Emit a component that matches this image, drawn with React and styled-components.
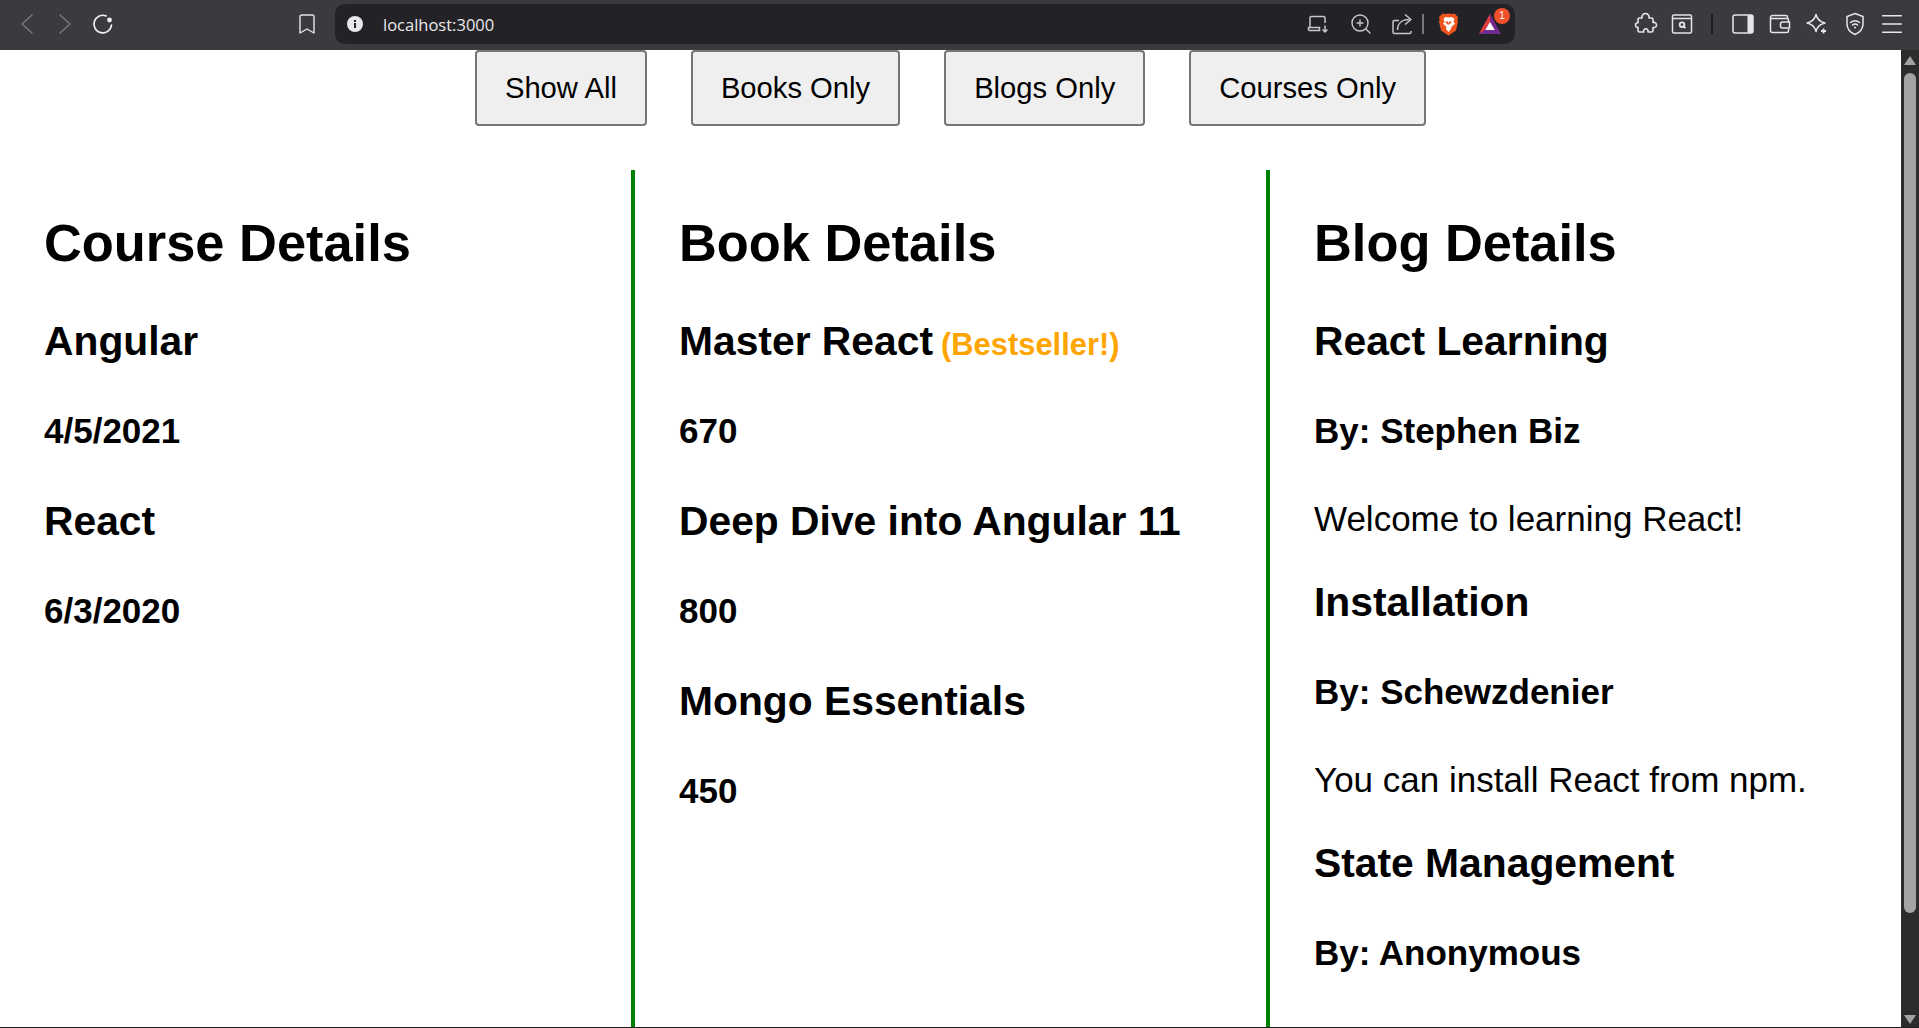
import React from 'react'
import styled, { createGlobalStyle } from 'styled-components'
import { Bookmark, ZoomIn, Menu } from 'lucide-react'

const GlobalStyle = createGlobalStyle`
  html, body {
    margin: 0;
    padding: 0;
    height: 100%;
    overflow: hidden;
    background: #ffffff;
  }
  * {
    box-sizing: border-box;
  }
`

const Shell = styled.div`
  display: flex;
  flex-direction: column;
  height: 1028px;
  border-bottom: 1px solid #1c1c1c;
  font-family: 'Liberation Sans', Arial, sans-serif;
  color: #000;
`

const Toolbar = styled.header`
  flex: none;
  display: flex;
  align-items: center;
  height: 50px;
  padding-bottom: 2px;
  background: #3b3a40;
  color: #e6e6e8;
`

const NavGroup = styled.div`
  display: flex;
  align-items: center;
  gap: 14px;
  width: 295px;
  padding-left: 15px;
`

const NavIcon = styled.span`
  display: inline-flex;
  color: ${(props) => (props.dim ? '#77767c' : '#f0f0f2')};
`

const BookmarkSlot = styled.span`
  display: inline-flex;
  justify-content: center;
  width: 24px;
  margin-right: 16px;
  color: #e6e6e8;
`

const AddressBar = styled.div`
  display: flex;
  align-items: center;
  width: 1180px;
  height: 40px;
  padding: 0 7px 0 12px;
  border-radius: 10px;
  background: #232227;
`

const Url = styled.span`
  flex: 1;
  margin-left: 20px;
  font-family: 'Open Sans', sans-serif;
  font-size: 16.5px;
  color: #e8e8ea;
`

const IconSlot = styled.span`
  position: relative;
  display: inline-flex;
  justify-content: center;
  align-items: center;
  width: ${(props) => props.size}px;
  color: ${(props) => props.tint || 'inherit'};
`

const Separator = styled.span`
  flex: none;
  width: ${(props) => props.thick || 1}px;
  height: 20px;
  background: ${(props) => props.color};
`

const Badge = styled.span`
  position: absolute;
  top: -6px;
  right: -2px;
  width: 16px;
  height: 16px;
  border-radius: 50%;
  background: #f0502a;
  color: #fff;
  font-size: 10px;
  line-height: 16px;
  text-align: center;
`

const Extensions = styled.div`
  display: flex;
  align-items: center;
  margin-left: 113px;
  color: #e6e6e8;
`

const Body = styled.div`
  flex: 1;
  display: flex;
  min-height: 0;
`

const Page = styled.main`
  flex: 1;
  min-width: 0;
  overflow: hidden;
  background: #fff;
`

const Filters = styled.nav`
  display: flex;
  justify-content: center;
  gap: 44px;
`

const FilterButton = styled.button`
  height: 76px;
  padding: 0 28px;
  border: 2px solid #767676;
  border-radius: 4px;
  background: #efefef;
  color: #000;
  font-family: inherit;
  font-size: 29.2px;
`

const Columns = styled.div`
  display: grid;
  grid-template-columns: repeat(3, 635px);
  margin-top: 44px;
`

const Column = styled.section`
  min-height: 900px;
  padding: 0 44px;
  border-right: ${(props) => (props.last ? 'none' : '4px solid green')};
`

const Heading = styled.h1`
  margin: 42px 0 44px;
  font-size: 52.4px;
  line-height: 62px;
`

const Title = styled.h2`
  margin: 39px 0 0;
  font-size: 40.8px;
  line-height: 47px;
  white-space: nowrap;
`

const Meta = styled.h3`
  margin: 46px 0 47px;
  font-size: 35px;
  line-height: 40px;
`

const Bestseller = styled.span`
  margin-left: 8px;
  color: orange;
  font-size: 30.9px;
  line-height: 1;
`

const Text = styled.p`
  margin: 0;
  font-size: 35px;
  line-height: 42px;
`

const Scrollbar = styled.aside`
  flex: none;
  display: flex;
  flex-direction: column;
  align-items: center;
  width: 18px;
  background: #2c2c2c;
`

const ScrollArrow = styled.span`
  width: 0;
  height: 0;
  margin: ${(props) => (props.down ? '0 0 3px' : '6px 0')};
  border-left: 6.5px solid transparent;
  border-right: 6.5px solid transparent;
  border-bottom: ${(props) => (props.down ? 'none' : '9px solid #a3a3a3')};
  border-top: ${(props) => (props.down ? '9px solid #a3a3a3' : 'none')};
`

const ScrollThumb = styled.span`
  width: 12px;
  height: 840px;
  margin-top: 2px;
  border-radius: 6px;
  background: #a3a3a3;
`

const ScrollTrack = styled.span`
  flex: 1;
`

const Chevron = ({ flip }) => (
  <svg width="24" height="24" viewBox="0 0 24 24" fill="none" stroke="currentColor" strokeWidth="1.5" strokeLinecap="round" strokeLinejoin="round">
    <path d={flip ? 'M7 3l10 9-10 9' : 'M17 3 7 12l10 9'} />
  </svg>
)

const Reload = () => (
  <svg width="24" height="24" viewBox="0 0 24 24" fill="none" stroke="currentColor" strokeWidth="1.7" strokeLinecap="round">
    <path d="M20.500 13A8.800 8.800 0 1 1 15 3.900" />
    <circle cx="18.500" cy="8" r="2.400" fill="currentColor" stroke="none" />
  </svg>
)

const InfoDot = () => (
  <svg width="16" height="16" viewBox="0 0 16 16">
    <circle cx="8" cy="8" r="8" fill="#e8e8ea" />
    <rect x="7" y="7" width="2" height="5" fill="#232227" />
    <rect x="7" y="4" width="2" height="2" fill="#232227" />
  </svg>
)

const Cast = () => (
  <svg width="22" height="22" viewBox="0 0 22 22" fill="none" stroke="currentColor" strokeWidth="1.500">
    <path d="M3 14V5a1.500 1.500 0 0 1 1.500-1.500h12A1.500 1.500 0 0 1 18 5v5" />
    <path d="M1.500 14.500h11v3h-10a1 1 0 0 1-1-1z" />
    <path d="M18 12.500v6.500M15.500 16.500 18 19l2.500-2.500" />
  </svg>
)

const ShareBox = () => (
  <svg width="22" height="24" viewBox="0 0 22 24" fill="none" stroke="currentColor" strokeWidth="1.500" strokeLinejoin="round">
    <path d="M8 8.500H3.500A1.500 1.500 0 0 0 2 10v10a1.500 1.500 0 0 0 1.500 1.500h15A1.500 1.500 0 0 0 20 20v-1" />
    <path d="M6.500 18c0-6 4-10.500 12-10.500" />
    <path d="M14 2.500l6 5-6 5" />
  </svg>
)

const BraveLion = () => (
  <svg width="21" height="23" viewBox="0 0 20 23">
    <path d="M10 .500 13.500 1 16 .500l3.500 3.500-.6 2 .6 2.500-2 9L10 22.500 2.500 17.500l-2-9L1.100 6 .500 4 4 .500 6.500 1z" fill="#f1531d" />
    <path d="M10 4.500l3-.500 3 1.800L15 9l1.500 1.800-3.500 3L12.500 16 10 19 7.500 16l.500-2.200-3.500-3L6 9 5 5.800 7 4z" fill="#fff" />
    <path d="M6.500 8.500h2.700l.8 2 .8-2h2.700l-2.400 3H8.900z" fill="#f1531d" />
  </svg>
)

const BatTriangle = () => (
  <svg width="22" height="20" viewBox="0 0 22 20">
    <path d="M11 0 22 20H0z" fill="#7a2a8f" />
    <path d="M11 0 0 20l5.500-4z" fill="#ee3f35" />
    <path d="M11 0 5.500 16 11 8z" fill="#e9413a" />
    <path d="M11 8l4.800 8H6.200z" fill="#fff" />
    <path d="M0 20h22l-5-3.500H5z" fill="#6e2c91" />
  </svg>
)

const PuzzlePiece = () => (
  <svg width="24" height="24" viewBox="0 0 24 24" fill="none" stroke="currentColor" strokeWidth="1.600" strokeLinejoin="round">
    <path d="M5.500 6H8c-.5-2.800 1.500-4.500 3.500-4.500S15.500 3.200 15 6h2.500A1.500 1.500 0 0 1 19 7.500v3c2.300-.5 3.500 1 3.500 2.500s-1.200 3-3.500 2.500v3a1.500 1.500 0 0 1-1.500 1.500H14c.5-2-.8-3.200-2.200-3.200S9.200 18 9.800 20H5.500A1.500 1.500 0 0 1 4 18.500v-3.200c-1.500.3-2.500-.8-2.500-2.200s1-2.600 2.500-2.300v-3.300A1.500 1.500 0 0 1 5.500 6z" />
  </svg>
)

const ReaderSearch = () => (
  <svg width="22" height="20" viewBox="0 0 22 20" fill="none" stroke="currentColor" strokeWidth="1.500">
    <rect x="1.500" y="1" width="19" height="18" rx="1.500" />
    <path d="M1.500 4.500h19" />
    <circle cx="11" cy="10.700" r="2.300" strokeWidth="1.800" />
    <path d="M12.800 12.500 14.500 14.200" strokeWidth="1.800" />
  </svg>
)

const SidePanel = () => (
  <svg width="22" height="20" viewBox="0 0 22 20">
    <rect x="1" y="1" width="20" height="18" rx="2" fill="none" stroke="currentColor" strokeWidth="1.500" />
    <rect x="15.500" y="1" width="5.500" height="18" rx="1" fill="currentColor" />
  </svg>
)

const WalletIcon = () => (
  <svg width="22" height="20" viewBox="0 0 22 20" fill="none" stroke="currentColor" strokeWidth="1.500">
    <path d="M18.500 4.500V3A1.500 1.500 0 0 0 17 1.500H3.500A2 2 0 0 0 1.500 3.500v13a2 2 0 0 0 2 2H18a1.500 1.500 0 0 0 1.500-1.500v-2" />
    <path d="M1.500 4.500H18a1.500 1.500 0 0 1 1.500 1.500v2" />
    <path d="M20.500 8h-7a2 2 0 0 0-2 2v2a2 2 0 0 0 2 2h7z" />
  </svg>
)

const Leo = () => (
  <svg width="22" height="22" viewBox="0 0 22 22" fill="none" stroke="currentColor" strokeWidth="1.500" strokeLinejoin="round">
    <path d="M10 1.500c1.200 5 3.500 7.300 9 8.500-5.500 1.200-7.800 3.500-9 8.500C8.800 13.500 6.500 11.200 1 10c5.500-1.200 7.800-3.500 9-8.500z" />
    <path d="M17.500 15.500v5M15 18h5" strokeWidth="1.800" />
  </svg>
)

const ShieldWifi = () => (
  <svg width="20" height="24" viewBox="0 0 20 24" fill="none" stroke="currentColor" strokeWidth="1.500" strokeLinecap="round">
    <path d="M10 1.500 18 4.500V12c0 5-3.500 8.500-8 10.500C5.500 20.500 2 17 2 12V4.500z" />
    <path d="M5.500 10.500a6.500 6.500 0 0 1 9 0M7.500 13a3.500 3.500 0 0 1 5 0" />
    <circle cx="10" cy="15.500" r="1" fill="currentColor" stroke="none" />
  </svg>
)

const courses = [
  { id: 1, title: 'Angular', date: '4/5/2021' },
  { id: 2, title: 'React', date: '6/3/2020' },
]

const books = [
  { id: 1, title: 'Master React', pages: 670, best: true },
  { id: 2, title: 'Deep Dive into Angular 11', pages: 800 },
  { id: 3, title: 'Mongo Essentials', pages: 450 },
]

const blogs = [
  { id: 1, title: 'React Learning', author: 'Stephen Biz', text: 'Welcome to learning React!' },
  { id: 2, title: 'Installation', author: 'Schewzdenier', text: 'You can install React from npm.' },
  { id: 3, title: 'State Management', author: 'Anonymous' },
]

const filters = ['Show All', 'Books Only', 'Blogs Only', 'Courses Only']

const App = () => (
  <Shell>
    <GlobalStyle />
    <Toolbar>
      <NavGroup>
        <NavIcon dim><Chevron /></NavIcon>
        <NavIcon dim><Chevron flip /></NavIcon>
        <NavIcon><Reload /></NavIcon>
      </NavGroup>
      <BookmarkSlot><Bookmark size={26} strokeWidth={1.4} /></BookmarkSlot>
      <AddressBar>
        <InfoDot />
        <Url>localhost:3000</Url>
        <IconSlot size={44} tint="#c8c8ca"><Cast /></IconSlot>
        <IconSlot size={42} tint="#c8c8ca"><ZoomIn size={24} strokeWidth={1.4} /></IconSlot>
        <IconSlot size={40} tint="#c8c8ca"><ShareBox /></IconSlot>
        <Separator color="#77767c" thick={2} />
        <IconSlot size={48}><BraveLion /></IconSlot>
        <IconSlot size={36}>
          <BatTriangle />
          <Badge>1</Badge>
        </IconSlot>
      </AddressBar>
      <Extensions>
        <IconSlot size={36}><PuzzlePiece /></IconSlot>
        <IconSlot size={36}><ReaderSearch /></IconSlot>
        <IconSlot size={24}><Separator color="#1f1f22" thick={2} /></IconSlot>
        <IconSlot size={38}><SidePanel /></IconSlot>
        <IconSlot size={36}><WalletIcon /></IconSlot>
        <IconSlot size={38}><Leo /></IconSlot>
        <IconSlot size={38}><ShieldWifi /></IconSlot>
        <IconSlot size={36}><Menu size={28} strokeWidth={1.3} /></IconSlot>
      </Extensions>
    </Toolbar>
    <Body>
      <Page>
        <Filters>
          {filters.map((label) => (
            <FilterButton key={label}>{label}</FilterButton>
          ))}
        </Filters>
        <Columns>
          <Column>
            <Heading>Course Details</Heading>
            {courses.map((course) => (
              <div key={course.id}>
                <Title>{course.title}</Title>
                <Meta>{course.date}</Meta>
              </div>
            ))}
          </Column>
          <Column>
            <Heading>Book Details</Heading>
            {books.map((book) => (
              <div key={book.id}>
                <Title>
                  {book.title}
                  {book.best && <Bestseller>(Bestseller!)</Bestseller>}
                </Title>
                <Meta>{book.pages}</Meta>
              </div>
            ))}
          </Column>
          <Column last>
            <Heading>Blog Details</Heading>
            {blogs.map((blog) => (
              <div key={blog.id}>
                <Title>{blog.title}</Title>
                <Meta>By: {blog.author}</Meta>
                {blog.text && <Text>{blog.text}</Text>}
              </div>
            ))}
          </Column>
        </Columns>
      </Page>
      <Scrollbar>
        <ScrollArrow />
        <ScrollThumb />
        <ScrollTrack />
        <ScrollArrow down />
      </Scrollbar>
    </Body>
  </Shell>
)

export default App
